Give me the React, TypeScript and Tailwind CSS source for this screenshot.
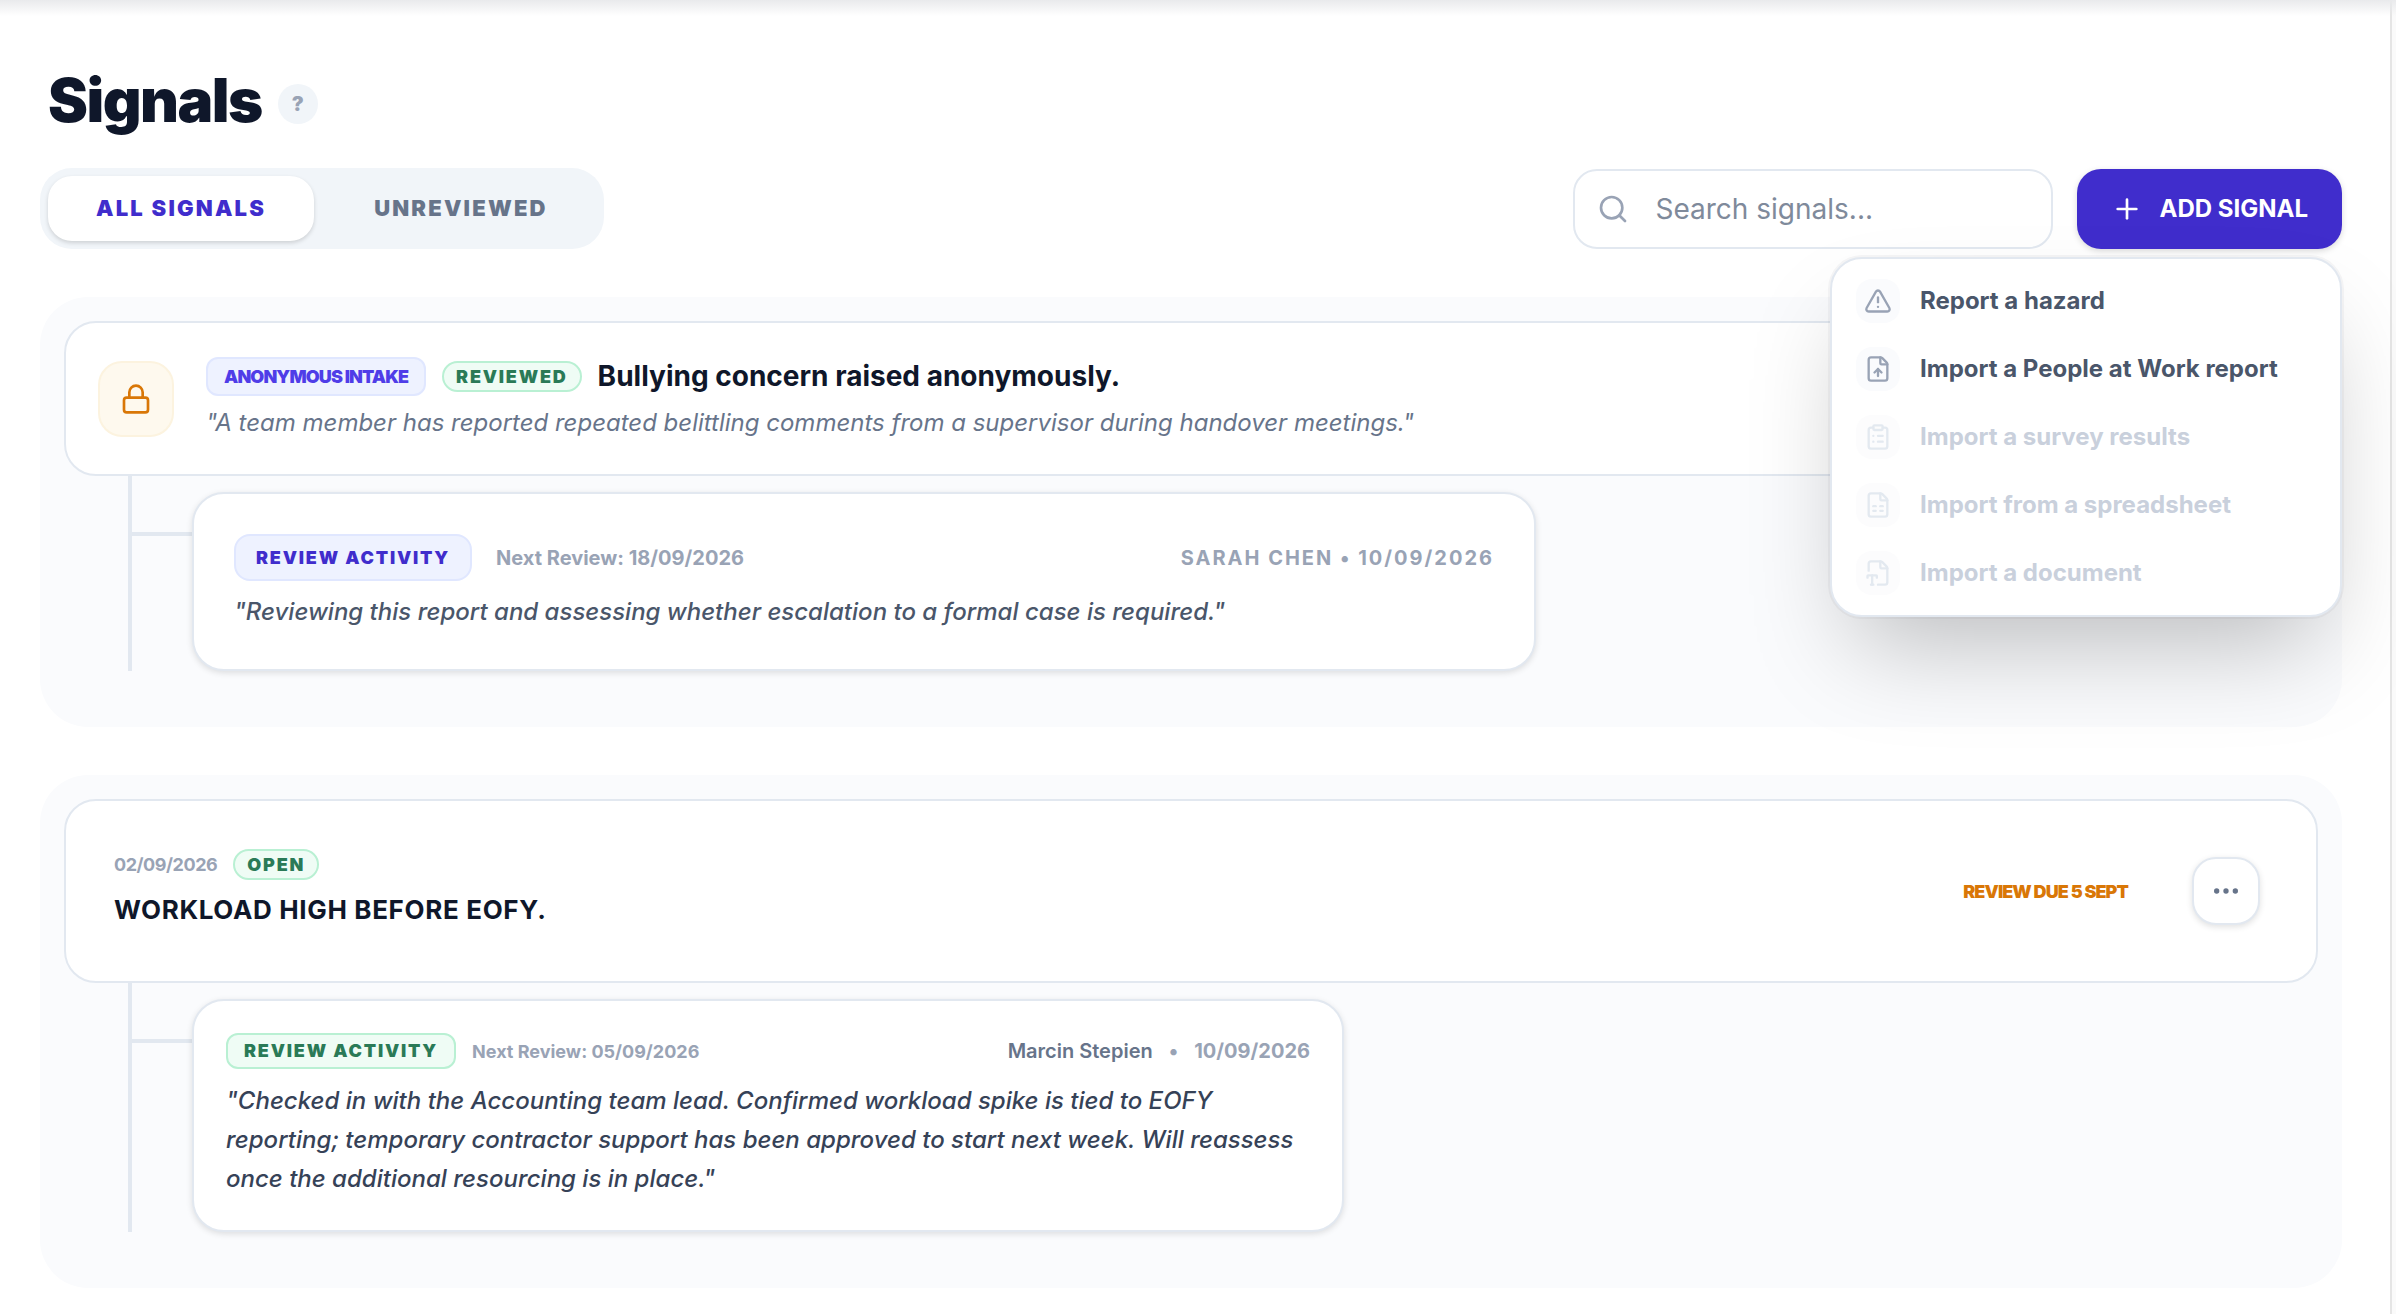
import type { ReactNode } from "react";
import {
  ClipboardList,
  Ellipsis,
  FileSpreadsheet,
  FileType2,
  FileUp,
  Lock,
  Plus,
  Search,
  TriangleAlert,
  type LucideIcon,
} from "lucide-react";

type MenuItem = { label: string; icon: LucideIcon; disabled?: boolean };

const menuItems: MenuItem[] = [
  { label: "Report a hazard", icon: TriangleAlert },
  { label: "Import a People at Work report", icon: FileUp },
  { label: "Import a survey results", icon: ClipboardList, disabled: true },
  { label: "Import from a spreadsheet", icon: FileSpreadsheet, disabled: true },
  { label: "Import a document", icon: FileType2, disabled: true },
];

function StatusPill({ children }: { children: ReactNode }) {
  return (
    <span className="rounded-2xl border-2 border-[#b9f0d3] bg-[#effcf5] px-3 text-[18px] leading-[27px] font-black tracking-widest text-[#2a7a57] uppercase">
      {children}
    </span>
  );
}

function AddSignalMenu() {
  return (
    <ul className="absolute top-full right-0 z-10 mt-2 w-[512px] rounded-[32px] border-2 border-slate-200 bg-white p-2 shadow-[0_0_0_2px_rgba(15,23,42,0.04),0_50px_100px_-24px_rgba(0,0,0,0.25)]">
      {menuItems.map(({ label, icon: Icon, disabled }) => (
        <li key={label}>
          <button
            type="button"
            disabled={disabled}
            className="flex w-full items-center gap-5 rounded-3xl px-4 py-3 text-left text-[24px] leading-[36px] font-bold text-[#4a566a] disabled:text-[#c9d0dc]"
          >
            <span
              className={`flex size-11 items-center justify-center rounded-2xl ${disabled ? "bg-[#fcfcfd] text-[#e3e9f0]" : "bg-[#fafbfd] text-[#99a3b5]"}`}
            >
              <Icon className="size-7" />
            </span>
            {label}
          </button>
        </li>
      ))}
    </ul>
  );
}

function SignalGroup({ card, activity }: { card: ReactNode; activity: ReactNode }) {
  return (
    <section className="rounded-[48px] bg-[#fafbfd] px-6 pt-6 pb-14">
      {card}
      <div className="ml-16 flex border-l-4 border-slate-200 pt-4">
        <div className="mt-10 h-1 w-[60px] shrink-0 bg-slate-200" />
        {activity}
      </div>
    </section>
  );
}

export default function App() {
  return (
    <div className="relative flex min-h-screen bg-white font-['Inter',sans-serif] text-[#0f172a]">
      <div className="absolute inset-x-0 top-0 h-4 bg-gradient-to-b from-[#e9eaec] to-transparent" />

      <main className="flex-1 border-r-2 border-[#e5e5e5] pt-16 pr-12 pb-6 pl-10">
        <div className="flex items-center gap-4 pl-2">
          <h1 className="text-[60px] leading-[72px] font-black tracking-tight">Signals</h1>
          <button type="button" aria-label="Help" className="mt-2 size-10 rounded-full bg-slate-100 text-[20px] font-black text-[#99a3b5]">
            ?
          </button>
        </div>

        <div className="mt-8 flex items-center justify-between">
          <div className="flex gap-3 rounded-[32px] bg-slate-100 p-2 text-[22px] leading-[33px] font-black tracking-widest">
            <button type="button" className="rounded-3xl bg-white px-12 py-4 text-[#402dcc] shadow-[0_2px_4px_rgba(0,0,0,0.15)]">
              ALL SIGNALS
            </button>
            <button type="button" className="rounded-3xl px-12 py-4 text-[#67748a]">
              UNREVIEWED
            </button>
          </div>

          <div className="relative flex gap-6">
            <label className="flex h-20 w-[480px] items-center gap-[26px] rounded-3xl border-2 border-slate-200 bg-white px-[22px]">
              <Search className="size-8 shrink-0 text-[#99a3b5]" />
              <input
                type="search"
                aria-label="Search signals"
                placeholder="Search signals..."
                className="w-full min-w-0 text-[28px] outline-none placeholder:text-[#7f8a9b]"
              />
            </label>
            <button type="button" className="flex h-20 items-center gap-4 rounded-3xl bg-[#402dcc] px-[34px] text-[24px] font-bold text-white shadow-[0_2px_6px_rgba(0,0,0,0.15)]">
              <Plus className="size-8" />
              ADD SIGNAL
            </button>
            <AddSignalMenu />
          </div>
        </div>

        <div className="mt-12 space-y-12">
          <SignalGroup
            card={
              <article className="flex items-center gap-8 rounded-[32px] border-2 border-slate-200 bg-white p-8">
                <div className="flex size-[76px] items-center justify-center rounded-3xl border-2 border-[#fcf3df] bg-[#fef9ee] text-[#d97706]">
                  <Lock className="size-8" />
                </div>
                <div className="space-y-1.5">
                  <div className="flex items-center gap-4">
                    <span className="rounded-xl border-2 border-indigo-100 bg-[#eef2ff] px-4 py-1 text-[18px] leading-[27px] font-black tracking-tighter text-[#4f3de8]">
                      ANONYMOUS INTAKE
                    </span>
                    <StatusPill>Reviewed</StatusPill>
                    <h2 className="text-[28px] leading-[42px] font-bold">Bullying concern raised anonymously.</h2>
                  </div>
                  <p className="text-[24px] leading-[39px] text-[#67748a] italic">
                    "A team member has reported repeated belittling comments from a supervisor during handover meetings."
                  </p>
                </div>
              </article>
            }
            activity={
              <article className="w-full max-w-[1344px] rounded-[32px] border-2 border-slate-200 bg-white p-10 shadow-[0_2px_6px_rgba(0,0,0,0.12)]">
                <div className="flex items-center gap-6">
                  <span className="rounded-2xl border-2 border-indigo-100 bg-[#eef2ff] px-5 py-2 text-[18px] leading-[27px] font-black tracking-widest text-[#402dcc]">
                    REVIEW ACTIVITY
                  </span>
                  <span className="text-[20px] font-bold text-[#99a3b5]">Next Review: 18/09/2026</span>
                  <span className="ml-auto text-[20px] font-bold tracking-widest text-[#99a3b5]">SARAH CHEN • 10/09/2026</span>
                </div>
                <p className="mt-3.5 text-[24px] leading-[34px] font-medium text-[#4a566a] italic">
                  "Reviewing this report and assessing whether escalation to a formal case is required."
                </p>
              </article>
            }
          />

          <SignalGroup
            card={
              <article className="flex items-center gap-16 rounded-[32px] border-2 border-slate-200 bg-white py-12 pr-14 pl-12">
                <div className="flex-1 space-y-2.5 pb-1">
                  <div className="flex items-center gap-4">
                    <time className="text-[18px] font-bold tracking-tight text-[#99a3b5]">02/09/2026</time>
                    <StatusPill>Open</StatusPill>
                  </div>
                  <h2 className="text-[26px] leading-[39px] font-bold tracking-wide">WORKLOAD HIGH BEFORE EOFY.</h2>
                </div>
                <span className="text-[18px] font-black tracking-tighter text-[#d97706]">REVIEW DUE 5 SEPT</span>
                <button
                  type="button"
                  aria-label="More actions"
                  className="flex size-[68px] items-center justify-center rounded-3xl border-2 border-slate-200 bg-white text-[#67748a] shadow-[0_2px_6px_rgba(0,0,0,0.12)]"
                >
                  <Ellipsis className="size-8" />
                </button>
              </article>
            }
            activity={
              <article className="w-full max-w-[1152px] rounded-[32px] border-2 border-slate-200 bg-white p-8 shadow-[0_2px_6px_rgba(0,0,0,0.12)]">
                <div className="flex items-center gap-4">
                  <span className="rounded-xl border-2 border-[#b9f0d3] bg-[#effcf5] px-4 py-0.5 text-[18px] leading-[28px] font-black tracking-widest text-[#2a7a57]">
                    REVIEW ACTIVITY
                  </span>
                  <span className="text-[18px] font-bold text-[#99a3b5]">Next Review: 05/09/2026</span>
                  <div className="ml-auto flex gap-4 text-[20px] text-[#99a3b5]">
                    <span className="font-semibold text-[#67748a]">Marcin Stepien</span>
                    <span className="font-bold">•</span>
                    <time className="font-bold">10/09/2026</time>
                  </div>
                </div>
                <p className="mt-3 text-[24px] leading-[39px] font-medium text-[#364257] italic">
                  "Checked in with the Accounting team lead. Confirmed workload spike is tied to EOFY reporting; temporary contractor support has been approved to start next week. Will reassess once the additional resourcing is in place."
                </p>
              </article>
            }
          />
        </div>
      </main>
      <div className="w-1 bg-[#fafafa]" />
    </div>
  );
}
